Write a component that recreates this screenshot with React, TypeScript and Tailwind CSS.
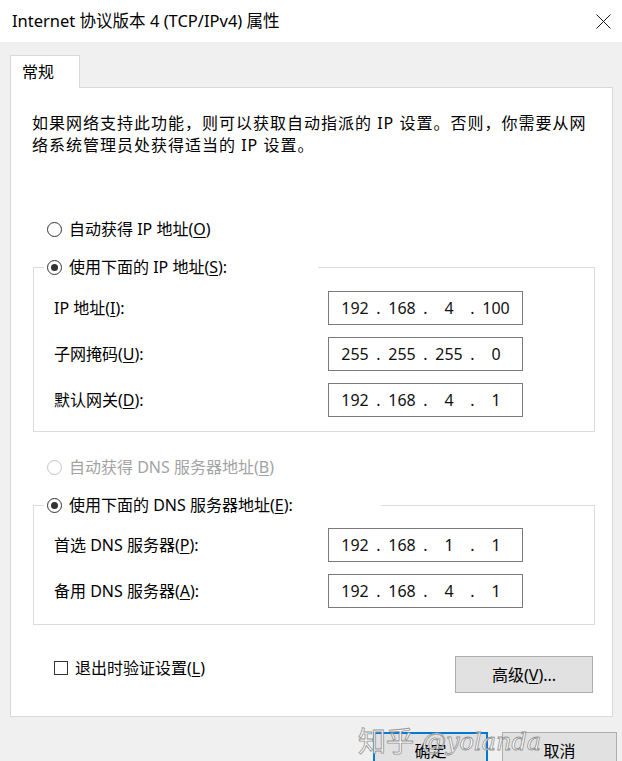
import React from 'react';

const ipRows = [
  { label: 'IP 地址', key: 'I', value: ['192', '168', '4', '100'] },
  { label: '子网掩码', key: 'U', value: ['255', '255', '255', '0'] },
  { label: '默认网关', key: 'D', value: ['192', '168', '4', '1'] },
];

const dnsRows = [
  { label: '首选 DNS 服务器', key: 'P', value: ['192', '168', '1', '1'] },
  { label: '备用 DNS 服务器', key: 'A', value: ['192', '168', '4', '1'] },
];

function Radio({ checked, disabled }: { checked?: boolean; disabled?: boolean }) {
  return (
    <span
      className={`w-[15px] h-[15px] shrink-0 rounded-full border bg-white flex items-center justify-center ${
        disabled ? 'border-[#c4c4c4]' : 'border-[#333333]'
      }`}
    >
      {checked && <span className="w-[7px] h-[7px] rounded-full bg-[#333333]" />}
    </span>
  );
}

function IpBox({ parts }: { parts: string[] }) {
  return (
    <div className="w-[195px] h-[34px] border border-[#7a7a7a] bg-white flex items-center pl-[6px] text-[16px] text-[#111]">
      {parts.map((p, i) => (
        <React.Fragment key={i}>
          <span className="w-[40px] text-center">{p}</span>
          {i < 3 && <span className="w-[7px] text-center">.</span>}
        </React.Fragment>
      ))}
    </div>
  );
}

function FieldRow({ label, hotkey, parts }: { label: string; hotkey: string; parts: string[] }) {
  return (
    <div className="flex items-center pl-[10px]">
      <span className="w-[274px]">
        {label}(<u className="underline-offset-2">{hotkey}</u>):
      </span>
      <IpBox parts={parts} />
    </div>
  );
}

export default function App() {
  return (
    <div className="w-[622px] h-[761px] bg-[#f0f0f0] overflow-hidden relative text-[16px] text-black font-['Noto_Sans','Noto_Sans_CJK_SC',sans-serif]">
      {/* Title bar */}
      <div className="h-[42px] bg-white flex items-center justify-between pl-[12px] pr-[11px]">
        <span className="text-[16.5px] leading-[20px]">Internet 协议版本 4 (TCP/IPv4) 属性</span>
        <svg width="15" height="15" viewBox="0 0 15 15" className="mt-[1px]">
          <path d="M0.5 0.5 L14.5 14.5 M14.5 0.5 L0.5 14.5" stroke="#111" strokeWidth="1" fill="none" />
        </svg>
      </div>

      <div className="pt-[13px] pl-[10px]">
        {/* Tab */}
        <div className="w-[70px] h-[33px] bg-white border-l border-t border-r border-[#d9d9d9] relative z-10 -mb-px flex items-center pl-[11px]">
          常规
        </div>

        {/* Tab page */}
        <div className="w-[603px] h-[630px] bg-white border border-[#d9d9d9] pl-[21px] pt-[24px]">
          <p className="leading-[22px] whitespace-nowrap tracking-[1px]">
            如果网络支持此功能，则可以获取自动指派的 IP 设置。否则，你需要从网
            <br />
            络系统管理员处获得适当的 IP 设置。
          </p>

          <div className="mt-[63px] ml-[15px] h-[20px] flex items-center gap-[7px]">
            <Radio />
            <span>
              自动获得 IP 地址(<u className="underline-offset-2">O</u>)
            </span>
          </div>

          <fieldset className="mt-[18px] ml-px w-[562px] border border-[#dcdcdc] px-[10px] pt-[14px] pb-[14px]">
            <legend className="w-[274px] h-[20px] pl-[3px]">
              <span className="flex items-center gap-[7px] h-[20px]">
                <Radio checked />
                <span>
                  使用下面的 IP 地址(<u className="underline-offset-2">S</u>):
                </span>
              </span>
            </legend>
            <div className="flex flex-col gap-[12px]">
              {ipRows.map((r) => (
                <FieldRow key={r.key} label={r.label} hotkey={r.key} parts={r.value} />
              ))}
            </div>
          </fieldset>

          <div className="mt-[25px] ml-[15px] h-[20px] flex items-center gap-[7px] text-[#a3a3a3]">
            <Radio disabled />
            <span>
              自动获得 DNS 服务器地址(<u className="underline-offset-2">B</u>)
            </span>
          </div>

          <fieldset className="mt-[18px] ml-px w-[562px] border border-[#dcdcdc] px-[10px] pt-[13px] pb-[16px]">
            <legend className="w-[337px] h-[20px] pl-[3px]">
              <span className="flex items-center gap-[7px] h-[20px]">
                <Radio checked />
                <span>
                  使用下面的 DNS 服务器地址(<u className="underline-offset-2">E</u>):
                </span>
              </span>
            </legend>
            <div className="flex flex-col gap-[12px]">
              {dnsRows.map((r) => (
                <FieldRow key={r.key} label={r.label} hotkey={r.key} parts={r.value} />
              ))}
            </div>
          </fieldset>

          <div className="mt-[31px] mr-[19px] flex justify-between items-start">
            <div className="mt-[2px] ml-[22px] h-[20px] flex items-center gap-[7px]">
              <span className="w-[14px] h-[14px] border border-[#333333] bg-white" />
              <span>
                退出时验证设置(<u className="underline-offset-2">L</u>)
              </span>
            </div>
            <button className="w-[138px] h-[37px] bg-[#e1e1e1] border border-[#adadad] flex items-center justify-center">
              高级(<u className="underline-offset-2">V</u>)...
            </button>
          </div>
        </div>

        {/* Dialog buttons */}
        <div className="w-[607px] mt-[15px] flex justify-end gap-[14px]">
          <button className="w-[115px] h-[38px] bg-[#e1e1e1] border-2 border-[#0078d7] flex items-center justify-center">
            确定
          </button>
          <button className="w-[115px] h-[38px] bg-[#e1e1e1] border border-[#adadad] flex items-center justify-center">
            取消
          </button>
        </div>
      </div>

      {/* Watermark */}
      <div className="absolute left-[358px] top-[724px] flex items-end gap-[8px] text-white opacity-90 [-webkit-text-stroke:0.8px_#8a8a8a] pointer-events-none">
        <span className="text-[28px] leading-[34px]">知乎</span>
        <span className="text-[24px] leading-[32px] italic font-['DejaVu_Serif',serif]">@yolanda</span>
      </div>
    </div>
  );
}
